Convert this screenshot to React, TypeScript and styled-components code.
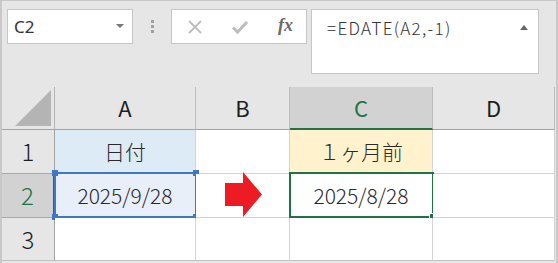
import React from "react";
import styled, { createGlobalStyle } from "styled-components";

const GlobalStyle = createGlobalStyle`
  html, body {
    margin: 0;
    padding: 0;
    background: #e6e6e6;
  }
  * {
    box-sizing: border-box;
  }
`;

const GREEN = "#217346";
const BLUE = "#3f78c8";
const CELL_FONT = `"Noto Sans CJK JP", "Noto Sans", sans-serif`;

const Frame = styled.div`
  width: 558px;
  height: 263px;
  background: #e6e6e6;
  border-top: 1px solid #c8c8c8;
  border-left: 2px solid #c8c8c8;
  border-right: 2px solid #c8c8c8;
  overflow: hidden;
`;

const Toolbar = styled.div`
  display: flex;
  align-items: flex-start;
  padding: 8px 0 0 5px;
  height: 73px;
`;

const NameBox = styled.div`
  width: 126px;
  height: 35px;
  background: #fff;
  border: 1px solid #c6c6c6;
  display: flex;
  align-items: center;
  justify-content: space-between;
  padding: 0 8px 0 6px;
`;

const NameText = styled.span`
  font-family: "Noto Sans", ${CELL_FONT};
  font-size: 17px;
  color: #333;
`;

const Caret = styled.span<{ $up?: boolean }>`
  width: 0;
  height: 0;
  border-left: 4px solid transparent;
  border-right: 4px solid transparent;
  ${(p) =>
    p.$up
      ? `border-bottom: 5px solid #666; margin-top: 9px;`
      : `border-top: 4px solid #777; margin-top: -2px;`}
`;

const Grip = styled.div`
  width: 38px;
  height: 35px;
  display: flex;
  flex-direction: column;
  align-items: center;
  justify-content: center;
  gap: 2px;

  span {
    width: 3px;
    height: 3px;
    background: #a0a0a0;
  }
`;

const FxBox = styled.div`
  width: 136px;
  height: 35px;
  background: #fff;
  border: 1px solid #c6c6c6;
  display: grid;
  grid-template-columns: 44px 44px 1fr;
  align-items: center;
  padding-left: 15px;
`;

const FxLabel = styled.span`
  font-family: "Liberation Serif", serif;
  font-style: italic;
  font-weight: bold;
  font-size: 18px;
  color: #6a6a6a;
  padding-left: 3px;
  margin-top: -2px;
`;

const FormulaBox = styled.div`
  margin-left: 4px;
  width: 228px;
  height: 65px;
  background: #fff;
  border: 1px solid #c6c6c6;
  display: flex;
  justify-content: space-between;
  align-items: flex-start;
  padding: 6px 10px 0 15px;
`;

const FormulaText = styled.span`
  font-family: ${CELL_FONT};
  font-size: 17px;
  font-weight: 300;
  letter-spacing: 1.3px;
  color: #333;
  line-height: 24px;
`;

const Sheet = styled.div`
  margin-top: 13px;
  display: grid;
  grid-template-columns: 53px 141px 94px 143px 122px;
  grid-template-rows: 43px 44px 44px 43px;
`;

const Corner = styled.div`
  background: #e6e6e6;
  border-right: 1px solid #b4b4b4;
  border-bottom: 1px solid #a3a3a3;
  display: flex;
  align-items: flex-end;
  justify-content: flex-end;
  padding: 0 3px 3px 0;
`;

const ColHead = styled.div<{ $active?: boolean }>`
  background: ${(p) => (p.$active ? "#d2d2d2" : "#e6e6e6")};
  border-right: 1px solid #bdbdbd;
  border-bottom: ${(p) => (p.$active ? `2px solid ${GREEN}` : "1px solid #a3a3a3")};
  display: flex;
  align-items: center;
  justify-content: center;
  font-family: ${CELL_FONT};
  font-size: 22px;
  color: ${(p) => (p.$active ? GREEN : "#1e1e1e")};
  padding-bottom: 2px;
`;

const RowHead = styled.div<{ $active?: boolean; $last?: boolean }>`
  background: ${(p) => (p.$active ? "#d2d2d2" : "#e6e6e6")};
  border-right: ${(p) => (p.$active ? `2px solid ${GREEN}` : "1px solid #a3a3a3")};
  border-bottom: 1px solid ${(p) => (p.$last ? "#c0c0c0" : "#a8a8a8")};
  display: flex;
  align-items: center;
  justify-content: center;
  font-family: ${CELL_FONT};
  font-size: 24px;
  font-weight: 300;
  color: ${(p) => (p.$active ? GREEN : "#1e1e1e")};
  padding-bottom: 2px;
`;

const Cell = styled.div<{ $fill?: string; $last?: boolean }>`
  position: relative;
  background: ${(p) => p.$fill || "#fff"};
  border-right: 1px solid #d4d4d4;
  border-bottom: 1px solid ${(p) => (p.$last ? "#c0c0c0" : "#d4d4d4")};
  display: flex;
  align-items: center;
  justify-content: center;
  font-family: ${CELL_FONT};
  font-size: 21px;
  font-weight: 300;
  color: #2a2a2a;
  padding-bottom: 1px;
`;

const Selection = styled.div<{ $color: string }>`
  position: absolute;
  top: -2px;
  left: -1px;
  right: -2px;
  bottom: -1px;
  border: 2px solid ${(p) => p.$color};
  pointer-events: none;
`;

const Handle = styled.span<{ $color: string; $x: "l" | "r"; $y: "t" | "b"; $ring?: boolean }>`
  position: absolute;
  width: ${(p) => (p.$ring ? 7 : 6)}px;
  height: ${(p) => (p.$ring ? 7 : 6)}px;
  background: ${(p) => p.$color};
  ${(p) => (p.$ring ? "border: 1px solid #fff;" : "")}
  ${(p) => (p.$x === "l" ? "left: -4px;" : "right: -4px;")}
  ${(p) => (p.$y === "t" ? "top: -4px;" : "bottom: -4px;")}
`;

const ArrowShape = styled.svg`
  position: absolute;
  left: 29px;
  top: -2px;
  overflow: visible;
`;

const XIcon = () => (
  <svg width="16" height="16" viewBox="0 0 16 16">
    <path d="M2 2 L14 14 M14 2 L2 14" stroke="#bdbdbd" strokeWidth="1.8" fill="none" />
  </svg>
);

const CheckIcon = () => (
  <svg width="18" height="16" viewBox="0 0 18 16">
    <path d="M2 8.5 L6.5 13 L16 3" stroke="#bdbdbd" strokeWidth="3" fill="none" />
  </svg>
);

const CornerTriangle = () => (
  <svg width="36" height="36" viewBox="0 0 36 36">
    <polygon points="0,36 36,36 36,0" fill="#b4b4b4" />
  </svg>
);

const columns = ["A", "B", "C", "D"];

export default function App() {
  return (
    <>
      <GlobalStyle />
      <Frame>
        <Toolbar>
          <NameBox>
            <NameText>C2</NameText>
            <Caret />
          </NameBox>
          <Grip>
            <span />
            <span />
            <span />
          </Grip>
          <FxBox>
            <XIcon />
            <CheckIcon />
            <FxLabel>fx</FxLabel>
          </FxBox>
          <FormulaBox>
            <FormulaText>=EDATE(A2,-1)</FormulaText>
            <Caret $up />
          </FormulaBox>
        </Toolbar>

        <Sheet>
          <Corner>
            <CornerTriangle />
          </Corner>
          {columns.map((c) => (
            <ColHead key={c} $active={c === "C"}>
              {c}
            </ColHead>
          ))}

          <RowHead>1</RowHead>
          <Cell $fill="#ddebf7">日付</Cell>
          <Cell />
          <Cell $fill="#fff2cc">１ヶ月前</Cell>
          <Cell />

          <RowHead $active>2</RowHead>
          <Cell $fill="#e9eff9">
            2025/9/28
            <Selection $color={BLUE}>
              <Handle $color={BLUE} $x="l" $y="t" />
              <Handle $color={BLUE} $x="r" $y="t" />
              <Handle $color={BLUE} $x="l" $y="b" />
              <Handle $color={BLUE} $x="r" $y="b" />
            </Selection>
          </Cell>
          <Cell>
            <ArrowShape width="38" height="46" viewBox="0 0 38 46">
              <polygon points="0,11 18,11 18,0 37,22.5 18,45 18,34 0,34" fill="#ed1c24" />
            </ArrowShape>
          </Cell>
          <Cell>
            2025/8/28
            <Selection $color={GREEN}>
              <Handle $color={GREEN} $x="r" $y="b" $ring />
            </Selection>
          </Cell>
          <Cell />

          <RowHead $last>3</RowHead>
          <Cell $last />
          <Cell $last />
          <Cell $last />
          <Cell $last />
        </Sheet>
      </Frame>
    </>
  );
}
